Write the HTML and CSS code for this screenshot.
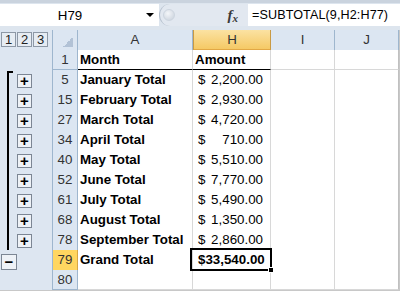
FILE: index.html
```html
<!DOCTYPE html>
<html lang="en">
<head>
    <meta charset="UTF-8">
    <title>Subtotals</title>
    <link rel="stylesheet" href="styles.css">
</head>
<body>

<div class="app">
    <div class="formula-bar">
        <div class="name-box">
            <span class="name">H79</span>
            <span class="drop"></span>
        </div>
        <div class="splitter">
            <span class="grip"></span>
            <span class="fx">f<i>x</i></span>
        </div>
        <div class="formula">=SUBTOTAL(9,H2:H77)</div>
    </div>

    <div class="sheet">
        <div class="row head">
            <div class="outline levels"><span>1</span><span>2</span><span>3</span></div>
            <div class="corner"></div>
            <div class="colhead">A</div>
            <div class="colhead sel">H</div>
            <div class="colhead after-sel">I</div>
            <div class="colhead">J</div>
        </div>

        <div class="row">
            <div class="outline"></div>
            <div class="rowhead">1</div>
            <div class="cell bold title">Month</div>
            <div class="cell bold title">Amount</div>
            <div class="cell"></div>
            <div class="cell"></div>
        </div>
        <div class="row">
            <div class="outline grp first"><span class="btn plus">+</span></div>
            <div class="rowhead">5</div>
            <div class="cell bold">January Total</div>
            <div class="cell amt"><span>$</span><span>2,200.00</span></div>
            <div class="cell"></div>
            <div class="cell"></div>
        </div>
        <div class="row">
            <div class="outline grp"><span class="btn plus">+</span></div>
            <div class="rowhead">15</div>
            <div class="cell bold">February Total</div>
            <div class="cell amt"><span>$</span><span>2,930.00</span></div>
            <div class="cell"></div>
            <div class="cell"></div>
        </div>
        <div class="row">
            <div class="outline grp"><span class="btn plus">+</span></div>
            <div class="rowhead">27</div>
            <div class="cell bold">March Total</div>
            <div class="cell amt"><span>$</span><span>4,720.00</span></div>
            <div class="cell"></div>
            <div class="cell"></div>
        </div>
        <div class="row">
            <div class="outline grp"><span class="btn plus">+</span></div>
            <div class="rowhead">34</div>
            <div class="cell bold">April Total</div>
            <div class="cell amt"><span>$</span><span>710.00</span></div>
            <div class="cell"></div>
            <div class="cell"></div>
        </div>
        <div class="row">
            <div class="outline grp"><span class="btn plus">+</span></div>
            <div class="rowhead">40</div>
            <div class="cell bold">May Total</div>
            <div class="cell amt"><span>$</span><span>5,510.00</span></div>
            <div class="cell"></div>
            <div class="cell"></div>
        </div>
        <div class="row">
            <div class="outline grp"><span class="btn plus">+</span></div>
            <div class="rowhead">52</div>
            <div class="cell bold">June Total</div>
            <div class="cell amt"><span>$</span><span>7,770.00</span></div>
            <div class="cell"></div>
            <div class="cell"></div>
        </div>
        <div class="row">
            <div class="outline grp"><span class="btn plus">+</span></div>
            <div class="rowhead">61</div>
            <div class="cell bold">July Total</div>
            <div class="cell amt"><span>$</span><span>5,490.00</span></div>
            <div class="cell"></div>
            <div class="cell"></div>
        </div>
        <div class="row">
            <div class="outline grp"><span class="btn plus">+</span></div>
            <div class="rowhead">68</div>
            <div class="cell bold">August Total</div>
            <div class="cell amt"><span>$</span><span>1,350.00</span></div>
            <div class="cell"></div>
            <div class="cell"></div>
        </div>
        <div class="row">
            <div class="outline grp"><span class="btn plus">+</span></div>
            <div class="rowhead">78</div>
            <div class="cell bold">September Total</div>
            <div class="cell amt"><span>$</span><span>2,860.00</span></div>
            <div class="cell"></div>
            <div class="cell"></div>
        </div>
        <div class="row">
            <div class="outline"><span class="btn minus">&minus;</span></div>
            <div class="rowhead sel">79</div>
            <div class="cell bold">Grand Total</div>
            <div class="cell amt bold active"><span>$</span><span>33,540.00</span></div>
            <div class="cell"></div>
            <div class="cell"></div>
        </div>
        <div class="row">
            <div class="outline"></div>
            <div class="rowhead">80</div>
            <div class="cell"></div>
            <div class="cell"></div>
            <div class="cell"></div>
            <div class="cell"></div>
        </div>
    </div>
</div>

</body>
</html>
```

FILE: styles.css
```css
body {
    margin: 0;
    font-family: "Liberation Sans", Arial, sans-serif;
    font-size: 13.33px;
    color: #000;
}
.app {
    width: 400px;
    height: 291px;
    overflow: hidden;
    background: #c8c8c8;
}

/* Formula bar */
.formula-bar {
    display: flex;
    height: 30px;
    box-sizing: border-box;
    padding: 1px 0 4px;
    background: #dde5ee;
    border-top: 3px solid #cad3de;
}
.name-box {
    width: 159px;
    background: #fff;
    display: flex;
    align-items: center;
}
.name-box .name {
    width: 140px;
    text-align: center;
}
.name-box .drop {
    width: 0;
    height: 0;
    border-left: 4px solid transparent;
    border-right: 4px solid transparent;
    border-top: 4px solid #000;
    margin-left: 6px;
}
.splitter {
    width: 89px;
    box-sizing: border-box;
    display: flex;
    align-items: center;
    justify-content: space-between;
    background: #e2e8f0;
    border-left: 1px solid #b4bfcc;
    border-radius: 11px 0 0 11px;
    padding: 0 10px 0 3px;
}
.grip {
    width: 10px;
    height: 10px;
    border-radius: 50%;
    background: radial-gradient(circle at 40% 35%, #f4f6f9, #c6cfda);
    border: 1px solid #cdd5df;
}
.fx {
    font-family: "Liberation Serif", serif;
    font-style: italic;
    font-weight: bold;
    font-size: 15px;
    color: #3a3a3a;
}
.fx i {
    font-size: 11px;
    position: relative;
    top: 2px;
}
.formula {
    flex: 1;
    background: #fff;
    padding-left: 4px;
    line-height: 22px;
    font-size: 12.6px;
    letter-spacing: 0.1px;
}

/* Sheet grid */
.row {
    display: grid;
    grid-template-columns: 52px 26px 115px 78px 64px 64px 1fr;
    height: 20px;
}
.outline {
    background: #dde6f1;
    display: flex;
    align-items: center;
}
.levels {
    gap: 1px;
    padding-left: 1px;
    align-items: flex-start;
    padding-top: 2px;
}
.levels span {
    width: 15px;
    height: 15px;
    box-sizing: border-box;
    border: 1px solid #8d98a6;
    background: #e6ecf3;
    text-align: center;
    line-height: 13px;
    font-size: 13px;
    color: #222;
}
.corner,
.colhead,
.rowhead {
    background: #dce6f2;
    color: #333;
    box-sizing: border-box;
    border-right: 1px solid #9eb6ce;
    border-bottom: 1px solid #9eb6ce;
}
.corner {
    border-left: 1px solid #9eb6ce;
    background: #dce6f2 linear-gradient(to top left, #b2c2d6 50%, transparent 50%) no-repeat right 4px bottom 3px / 10px 10px;
}
.colhead {
    text-align: center;
    line-height: 19px;
}
.colhead.sel {
    background: linear-gradient(#fbe2a2, #f5c965);
    border-left: 1px solid #c99a44;
    border-right: 1px solid #c99a44;
    border-bottom: 2px solid #e2a845;
}
.rowhead {
    border-left: 1px solid #9eb6ce;
    text-align: center;
    line-height: 19px;
}
.rowhead.sel {
    background: #ffd660;
    border-right-color: #d6a645;
    border-bottom-color: #d6a645;
}
.cell {
    background: #fff;
    box-sizing: border-box;
    border-right: 1px solid #d8d8d8;
    border-bottom: 1px solid #d8d8d8;
    padding-left: 2px;
    line-height: 20px;
    white-space: nowrap;
    overflow: hidden;
}
.row .cell:last-of-type {
    border-right-color: #c0c0c0;
}
.bold {
    font-weight: bold;
}
.title {
    border-bottom-color: #000;
}
.amt {
    display: flex;
    justify-content: space-between;
    padding: 0 7px 0 5px;
    overflow: visible;
}

/* Active cell */
.active {
    position: relative;
}
.active::after {
    content: "";
    position: absolute;
    left: -3px;
    top: -2px;
    right: -2px;
    bottom: -1px;
    border: 2px solid #000;
}
.active::before {
    content: "";
    position: absolute;
    right: -4px;
    bottom: -3px;
    width: 4px;
    height: 4px;
    background: #000;
    border: 1px solid #fff;
    z-index: 1;
}

/* Outline group bracket */
.grp {
    background: #dde6f1 linear-gradient(#000, #000) no-repeat 7px 0 / 2px 100%;
}
.grp.first {
    background: #dde6f1;
    background-image: linear-gradient(#000, #000), linear-gradient(#000, #000);
    background-repeat: no-repeat;
    background-position: 7px 1px, 7px 1px;
    background-size: 2px 19px, 6px 2px;
}
.btn {
    box-sizing: border-box;
    border: 1px solid #7c8694;
    background: #eef2f7;
    font-weight: bold;
    text-align: center;
    color: #000;
}
.plus {
    width: 15px;
    height: 14px;
    margin-left: 17px;
    line-height: 12px;
    font-size: 15px;
}
.minus {
    width: 16px;
    height: 16px;
    margin-left: 1px;
    margin-top: 2px;
    line-height: 13px;
    font-size: 15px;
}
```
